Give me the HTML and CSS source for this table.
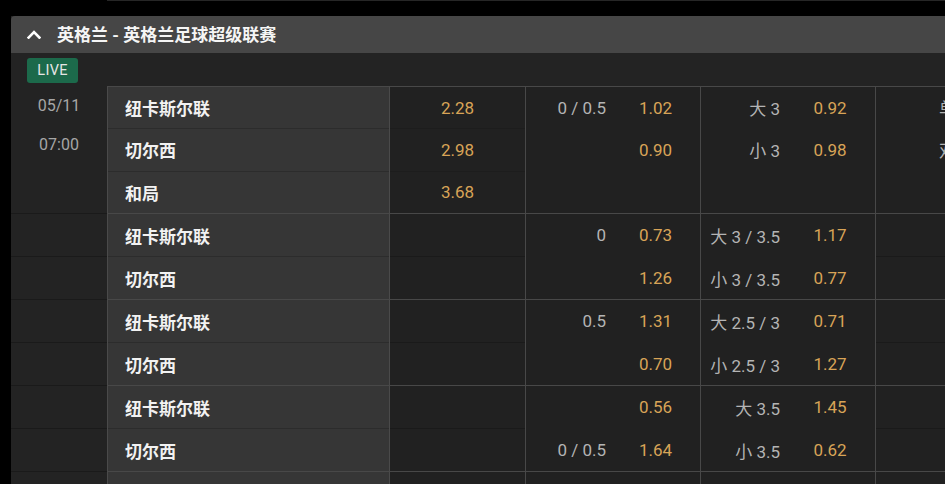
FILE: index.html
```html
<!DOCTYPE html>
<html lang="zh-CN">
<head>
<meta charset="utf-8">
<title>英格兰足球超级联赛</title>
<link rel="stylesheet" href="styles.css">
</head>
<body>
<div class="topline"></div>
<section class="panel">
  <header class="league">
    <svg class="chev" width="14" height="9" viewBox="0 0 14 9"><polyline points="1.6,7.6 7,2.2 12.4,7.6" fill="none" stroke="#ffffff" stroke-width="2.6" stroke-linecap="square"/></svg>
    <span class="league-name">英格兰 - 英格兰足球超级联赛</span>
  </header>
  <div class="live-row"><span class="live">LIVE</span></div>
  <div class="table">
    <div class="group g3 first">
      <div class="col date"><div class="dt">05/11</div><div class="dt">07:00</div></div>
      <div class="col team"><div class="cell">纽卡斯尔联</div><div class="cell">切尔西</div><div class="cell">和局</div></div>
      <div class="col x12 faint"><div class="cell odd">2.28</div><div class="cell odd">2.98</div><div class="cell odd">3.68</div></div>
      <div class="col pair hdp">
        <div class="pcell"><span class="lbl">0 / 0.5</span><span class="odd">1.02</span></div>
        <div class="pcell"><span class="lbl"></span><span class="odd">0.90</span></div>
        <div class="pcell"><span class="lbl"></span><span class="odd"></span></div>
      </div>
      <div class="col pair ou">
        <div class="pcell"><span class="lbl">大 3</span><span class="odd">0.92</span></div>
        <div class="pcell"><span class="lbl">小 3</span><span class="odd">0.98</span></div>
        <div class="pcell"><span class="lbl"></span><span class="odd"></span></div>
      </div>
      <div class="col pair oe">
        <div class="pcell"><span class="lbl">单</span><span class="odd"></span></div>
        <div class="pcell"><span class="lbl">双</span><span class="odd"></span></div>
        <div class="pcell"><span class="lbl"></span><span class="odd"></span></div>
      </div>
    </div>

    <div class="group g2">
      <div class="col date"><div class="cell"></div><div class="cell"></div></div>
      <div class="col team"><div class="cell">纽卡斯尔联</div><div class="cell">切尔西</div></div>
      <div class="col x12"><div class="cell"></div><div class="cell"></div></div>
      <div class="col pair hdp">
        <div class="pcell"><span class="lbl">0</span><span class="odd">0.73</span></div>
        <div class="pcell"><span class="lbl"></span><span class="odd">1.26</span></div>
      </div>
      <div class="col pair ou">
        <div class="pcell"><span class="lbl">大 3 / 3.5</span><span class="odd">1.17</span></div>
        <div class="pcell"><span class="lbl">小 3 / 3.5</span><span class="odd">0.77</span></div>
      </div>
      <div class="col x12 oe-s"><div class="cell"></div><div class="cell"></div></div>
    </div>

    <div class="group g2">
      <div class="col date"><div class="cell"></div><div class="cell"></div></div>
      <div class="col team"><div class="cell">纽卡斯尔联</div><div class="cell">切尔西</div></div>
      <div class="col x12"><div class="cell"></div><div class="cell"></div></div>
      <div class="col pair hdp">
        <div class="pcell"><span class="lbl">0.5</span><span class="odd">1.31</span></div>
        <div class="pcell"><span class="lbl"></span><span class="odd">0.70</span></div>
      </div>
      <div class="col pair ou">
        <div class="pcell"><span class="lbl">大 2.5 / 3</span><span class="odd">0.71</span></div>
        <div class="pcell"><span class="lbl">小 2.5 / 3</span><span class="odd">1.27</span></div>
      </div>
      <div class="col x12 oe-s"><div class="cell"></div><div class="cell"></div></div>
    </div>

    <div class="group g2">
      <div class="col date"><div class="cell"></div><div class="cell"></div></div>
      <div class="col team"><div class="cell">纽卡斯尔联</div><div class="cell">切尔西</div></div>
      <div class="col x12"><div class="cell"></div><div class="cell"></div></div>
      <div class="col pair hdp">
        <div class="pcell"><span class="lbl"></span><span class="odd">0.56</span></div>
        <div class="pcell"><span class="lbl">0 / 0.5</span><span class="odd">1.64</span></div>
      </div>
      <div class="col pair ou">
        <div class="pcell"><span class="lbl">大 3.5</span><span class="odd">1.45</span></div>
        <div class="pcell"><span class="lbl">小 3.5</span><span class="odd">0.62</span></div>
      </div>
      <div class="col x12 oe-s"><div class="cell"></div><div class="cell"></div></div>
    </div>

    <div class="group g2">
      <div class="col date"><div class="cell"></div><div class="cell"></div></div>
      <div class="col team"><div class="cell"></div><div class="cell"></div></div>
      <div class="col x12"><div class="cell"></div><div class="cell"></div></div>
      <div class="col pair hdp"><div class="pcell"></div><div class="pcell"></div></div>
      <div class="col pair ou"><div class="pcell"></div><div class="pcell"></div></div>
      <div class="col x12 oe-s"><div class="cell"></div><div class="cell"></div></div>
    </div>
  </div>
</section>
</body>
</html>
```

FILE: styles.css
```css
* { box-sizing: border-box; }

html, body {
  margin: 0;
  padding: 0;
  background: #000;
  width: 945px;
  height: 484px;
  overflow: hidden;
  font-family: Roboto, "Noto Sans CJK SC", sans-serif;
}

.topline {
  height: 1px;
  margin-left: 107px;
  background: #262626;
}

.panel {
  margin: 15px 0 0 11px;
  width: 1200px;
  background: #232323;
}

.league {
  height: 37px;
  background: #464646;
  border-radius: 4px 0 0 0;
  display: flex;
  align-items: center;
  padding-left: 16px;
}

.chev { display: block; margin-right: 16px; margin-top: -1px; }

.league-name {
  color: #f5f5f5;
  font-family: Roboto, "Noto Sans CJK SC", sans-serif;
  font-weight: 700;
  font-size: 17px;
  line-height: 20px;
}

.live-row {
  height: 33px;
  padding: 5px 0 0 16px;
}

.live {
  display: inline-flex;
  align-items: center;
  justify-content: center;
  width: 51px;
  height: 25px;
  border-radius: 3px;
  background: #1c6a4b;
  color: #e6e6e6;
  font-size: 14.5px;
  letter-spacing: 0.3px;
}

.group {
  display: grid;
  grid-template-columns: 96px 283px 136px 175px 175px 200px;
}
.g3 { height: 127px; }
.g2 { height: 86px; }

.col {
  display: flex;
  flex-direction: column;
  border-top: 1px solid #484848;
  background: #212121;
}

.cell, .pcell {
  flex: 1 1 0;
  display: flex;
  align-items: center;
}
.cell + .cell { border-top: 1px solid #1a1a1a; }
.pcell + .pcell { border-top: 1px solid transparent; }
.faint .cell + .cell { border-top-color: #1d1d1d; }

.date {
  background: #232323;
  border-top: 1px solid #1a1a1a;
}
.first .date { border-top-color: transparent; padding-top: 0; }

.dt {
  height: 40px;
  line-height: 40px;
  margin-top: -1px;
  text-align: center;
  color: #a6a6a6;
  font-size: 16px;
}

.team {
  background: #363636;
  border-left: 1px solid #4a4a4a;
  border-right: 1px solid #4a4a4a;
}
.team .cell {
  padding-left: 17px;
  color: #f2f2f2;
  font-family: "Noto Sans CJK SC", sans-serif;
  font-weight: 700;
  font-size: 17px;
}
.team .cell + .cell { border-top-color: #2c2c2c; }

.x12 { border-right: 1px solid #484848; }
.x12 .cell { justify-content: center; }
.oe-s { border-right: none; }

.odd {
  color: #d8a457;
  font-size: 17px;
}

.pair { border-right: 1px solid #484848; }
.pair .lbl {
  width: 85px;
  padding-right: 5px;
  text-align: right;
  color: #b4b4b4;
  font-size: 17px;
  font-family: Roboto, "Noto Sans CJK SC", sans-serif;
}
.pair .odd {
  flex: 1;
  text-align: center;
}
.ou .lbl { width: 84px; }
.oe { border-right: none; }
```
